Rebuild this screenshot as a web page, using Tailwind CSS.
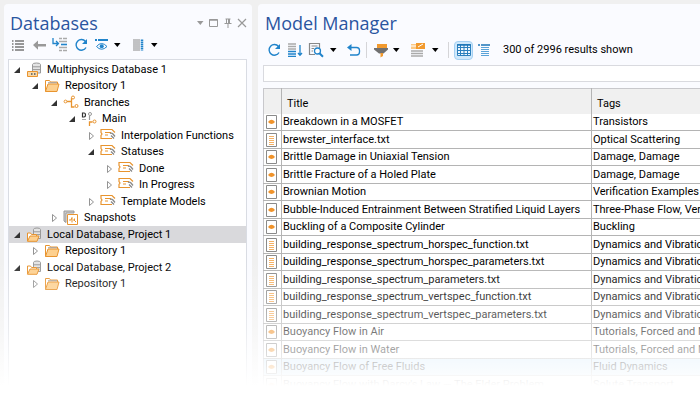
<!DOCTYPE html>
<html lang="en">
<head>
    <meta charset="UTF-8">
    <meta name="viewport" content="width=device-width, initial-scale=1.0">
    <title>Model Manager</title>
    <script src="https://cdn.jsdelivr.net/npm/@tailwindcss/browser@4"></script>
</head>
<body class="h-screen overflow-hidden bg-[#f0f0f0] font-['Roboto','Open_Sans',sans-serif] text-[11px] leading-4 text-black [&_svg]:fill-none">

    <!-- Shared icons -->
    <svg class="hidden">
        <symbol id="i-list" viewBox="0 0 16 16"><path d="M2 4h1.5M2 7h1.5M2 10h1.5M2 13h1.5M5 4h9M5 7h9M5 10h9M5 13h9" stroke="#777" stroke-width="1.3"/></symbol>
        <symbol id="i-back" viewBox="0 0 16 16"><path d="M2 8l5-4.500V7h8v2.500H7v3.300z" fill="#999"/></symbol>
        <symbol id="i-insert" viewBox="0 0 16 16"><path d="M1 1v5.500h5M4 4l2.500 2.500L4 9" stroke="#2184cb" stroke-width="1.3"/><path d="M7 1.500h3M11 1.500h4M7 4.500h8M7 10.500h8M7 13.500h3M11 13.500h4" stroke="#aaa" stroke-width="1.3"/><path d="M9 7.500h6" stroke="#2184cb" stroke-width="1.6"/></symbol>
        <symbol id="i-refresh" viewBox="0 0 16 16"><path d="M12.500 4.500A5.300 5.300 0 1 0 13 10.500" stroke="#2184cb" stroke-width="1.4"/><path d="M14 2v5H9z" fill="#2184cb"/></symbol>
        <symbol id="i-eye" viewBox="0 0 16 16"><path d="M1 3h2M4 3h10" stroke="#2184cb" stroke-width="2"/><path d="M2.500 9.500q5-6 10.500 0q-5.500 5.500-10.500 0z" stroke="#2184cb"/><circle cx="7.700" cy="9.300" r="2" fill="#2184cb"/></symbol>
        <symbol id="i-columns" viewBox="0 0 16 16"><path d="M2 3h7M2 5h7M2 7h7M2 9h7M2 11h7M2 13h7" stroke="#888"/><path d="M11 2.500v11" stroke="#2184cb" stroke-width="2.500" stroke-dasharray="1.500 .5"/></symbol>
        <symbol id="i-caret" viewBox="0 0 10 10"><path d="M2 3h6.500L5.300 7z" fill="currentColor"/></symbol>
        <symbol id="i-max" viewBox="0 0 10 10"><path d="M.5 1.500h8v7h-8z" stroke="#999"/><path d="M.5 2h8" stroke="#999" stroke-width="1.500"/></symbol>
        <symbol id="i-pin" viewBox="0 0 10 10"><path d="M2.500 1h5M3.500 1v4M1.500 5.500h7M5 6v4" stroke="#999"/><path d="M5 1h2v4.500H5z" fill="#999"/></symbol>
        <symbol id="i-close" viewBox="0 0 10 10"><path d="M1 1l8 8M9 1L1 9" stroke="#999" stroke-width="1.200"/></symbol>

        <symbol id="i-down" viewBox="0 0 16 16"><path d="M1 2h8M1 4.500h8M1 7h8" stroke="#aaa" stroke-width="1.300"/><path d="M1 9.500h8M1 12h8M1 14.300h8M13 3v10M11 11l2 2.300 2-2.300" stroke="#2184cb" stroke-width="1.300"/></symbol>
        <symbol id="i-search" viewBox="0 0 16 16"><path d="M7 12.500H1.500v-11h10V6M3.500 4h6M3.500 6.500H6M3.500 9H5" stroke="#888" stroke-width="1.200"/><circle cx="9.500" cy="9" r="3" fill="#fff" stroke="#2184cb" stroke-width="1.300"/><path d="M11.500 11.200l3.500 3.600" stroke="#2184cb" stroke-width="2"/></symbol>
        <symbol id="i-undo" viewBox="0 0 16 16"><path d="M3 5.500h7.500q3 0 3 3v1.500q0 3-3 3H4" stroke="#2184cb" stroke-width="1.300"/><path d="M1 5.500L5.500 2v7z" fill="#2184cb"/></symbol>
        <symbol id="i-filter" viewBox="0 0 16 16"><path d="M4 2h10v4H4z" fill="#f29a2e"/><path d="M1 6h14v1.500l-4.500 4H6L1 7.500z" fill="#707070"/><path d="M7.500 11h2.500v3l-2.500 1.500z" fill="#f29a2e"/></symbol>
        <symbol id="i-tag" viewBox="0 0 16 16"><path d="M1 2h6v5H1z" fill="#fbc885"/><path d="M6 1h9v6H6z" fill="#f29a2e"/><path d="M8 5l5-3M1 4h5" stroke="#fff"/><path d="M1 9h12M1 11.500h12M1 14h12" stroke="#aaa" stroke-width="1.300"/></symbol>
        <symbol id="i-grid" viewBox="0 0 16 16"><path d="M1.500 2.500h13v11h-13z" fill="#eef7fe"/><path d="M1.500 2.500h13v11h-13zM1 5.500h14M1 8.500h14M1 11.500h14M4.500 2.500v11M8 2.500v11M11.500 2.500v11" stroke="#2b7fbd"/><path d="M1 3h14" stroke="#1c76b8" stroke-width="1.500"/></symbol>
        <symbol id="i-detail" viewBox="0 0 16 16"><path d="M1 3h2M4 3h9" stroke="#1c76b8" stroke-width="1.600"/><path d="M4 5.500h8M4 7.500h8M4 9.500h8M4 11.500h8M4 13.500h8" stroke="#5aa3d8"/></symbol>

        <symbol id="i-open" viewBox="0 0 8 8"><path d="M7 1v6H1z" fill="#333"/></symbol>
        <symbol id="i-closed" viewBox="0 0 8 8"><path d="M2.500 .5l4 3.500-4 3.500z" stroke="#888" stroke-width=".9"/></symbol>
        <symbol id="i-server" viewBox="0 0 16 16"><path d="M6.500 2.500q0-1.500 4-1.500t4 1.500v8.500h-8z" fill="#e4e4e4" stroke="#999"/><path d="M6.500 4.800h8M6.500 7.600h8" stroke="#999"/><path d="M1.500 9.500h10v5h-10z" fill="#fbd7a2" stroke="#e8942f"/><path d="M5 12h1.500M8 12h1.500" stroke="#456" stroke-width="1.500"/></symbol>
        <symbol id="i-folder" viewBox="0 0 16 16"><path d="M1.500 13.500v-11h4l1 1.500h7v3" fill="#fff" stroke="#e8942f"/><path d="M4 4.800h9" stroke="#999"/><path d="M1.500 13.500l2.500-7.500h11l-2 7.500z" fill="#fdd08f" stroke="#e8942f"/></symbol>
        <symbol id="i-local" viewBox="0 0 16 16"><path d="M7.500 2.500q0-1.500 3.500-1.500t3.500 1.500v9h-7z" fill="#e4e4e4" stroke="#999"/><path d="M7.500 4.800h7M7.500 7.600h7" stroke="#999"/><path d="M1.500 14v-8h3l1 1.500h5V9" fill="#fff" stroke="#e8942f"/><path d="M1.500 14.300L4 9h9l-2 5.300z" fill="#fdd08f" stroke="#e8942f"/></symbol>
        <symbol id="i-branch" viewBox="0 0 16 16"><path d="M4 6.500h4.500M9.500 3.500h-1V12h3" stroke="#e8942f" stroke-width="1.300"/><circle cx="2.500" cy="6.500" r="1.400" stroke="#e8942f"/><circle cx="10" cy="2.500" r="1.500" fill="#fff" stroke="#e8942f"/><circle cx="13.500" cy="11" r="1.500" fill="#fff" stroke="#e8942f"/></symbol>
        <symbol id="i-main" viewBox="0 0 16 16"><path d="M1.500 2v4h1.500q1.500 0 1.500-2t-1.500-2z" stroke="#333" stroke-width="1.200"/><path d="M1 8.500h4" stroke="#aaa"/><circle cx="9" cy="3" r="1.500" stroke="#999"/><path d="M8.500 5v4" stroke="#999" stroke-width="1.200"/><path d="M8.500 15v-4h3" stroke="#e8942f" stroke-width="1.300"/><circle cx="13.500" cy="10.500" r="1.500" stroke="#e8942f"/></symbol>
        <symbol id="i-status" viewBox="0 0 16 16"><path d="M12 10.500H1v-3l1-1.500-1-1.500v-3h11l3 3" stroke="#e8942f" stroke-width="1.200"/><path d="M5 4.500h6M5 7h3" stroke="#e8942f"/><path d="M10 5.500q1.500-1 3 .5l2 2.500M11 7.500l3 3" stroke="#888" stroke-width="1.300"/></symbol>
        <symbol id="i-snap" viewBox="0 0 16 16"><path d="M1 11V1h10v2H3v9.500z" fill="#ccc" stroke="#999"/><path d="M4.500 4.500h10v10h-10z" fill="#fff" stroke="#e8942f"/><path d="M6 10h2l1-2.500v5M10 10h1l2 2M11.500 8.500v2" stroke="#e8942f"/></symbol>
        <symbol id="i-model" viewBox="0 0 12 14"><path d="M.5.5h10v13H.5z" fill="#fff" stroke="#8a8a8a"/><path d="M2 7q3.500-4.500 7 0q-3.500 4-7 0z" fill="#f0932b"/></symbol>
        <symbol id="i-file" viewBox="0 0 12 14"><path d="M.5.5h10v13H.5z" fill="#fff" stroke="#8a8a8a"/><path d="M3 3.500h5M3 5.500h5M3 7.500h5M3 9.500h5M3 11.500h5" stroke="#f5b266" stroke-width="1.200"/></symbol>
    </svg>

    <div class="relative flex h-full gap-[6px] pt-1 pl-1">
        <section class="flex w-[248px] shrink-0 flex-col rounded-t bg-[#fafbff] pr-[5px] pl-1">
            <header class="flex items-center justify-between pt-[5px] pl-[2px]">
                <h1 class="font-['Open_Sans',sans-serif] text-[18px] leading-7 text-[#2a559f]">Databases</h1>
                <div class="flex gap-1 text-[#999]">
                    <button aria-label="Menu"><svg class="size-[10px]"><use href="#i-caret"/></svg></button>
                    <button aria-label="Maximize"><svg class="size-[10px]"><use href="#i-max"/></svg></button>
                    <button aria-label="Pin"><svg class="size-[10px]"><use href="#i-pin"/></svg></button>
                    <button aria-label="Close"><svg class="size-[10px]"><use href="#i-close"/></svg></button>
                </div>
            </header>
            <div class="flex h-[22px] items-start gap-[5px] pl-[2px] text-black">
                <button aria-label="Show list"><svg class="size-4"><use href="#i-list"/></svg></button>
                <button aria-label="Back"><svg class="size-4"><use href="#i-back"/></svg></button>
                <button aria-label="Insert"><svg class="size-4"><use href="#i-insert"/></svg></button>
                <button aria-label="Refresh"><svg class="size-4"><use href="#i-refresh"/></svg></button>
                <button aria-label="Visibility" class="flex items-center gap-[2px]"><svg class="size-4"><use href="#i-eye"/></svg><svg class="size-[10px]"><use href="#i-caret"/></svg></button>
                <button aria-label="Columns" class="ml-1 flex items-center gap-[2px]"><svg class="size-4"><use href="#i-columns"/></svg><svg class="size-[10px]"><use href="#i-caret"/></svg></button>
            </div>
            <ul id="tree" class="flex-1 border border-[#d9dce3] bg-white pt-px"></ul>
        </section>

        <section class="flex min-w-0 flex-1 flex-col overflow-hidden rounded-tl bg-[#fafbff] pl-[5px]">
            <h1 class="pt-[3px] pl-[2px] font-['Open_Sans',sans-serif] text-[18px] leading-8 text-[#2a559f]">Model Manager</h1>
            <div class="flex h-[22px] items-center pl-[3px] text-black">
                <button aria-label="Refresh"><svg class="size-4"><use href="#i-refresh"/></svg></button>
                <button aria-label="Load more" class="ml-[5px]"><svg class="size-4"><use href="#i-down"/></svg></button>
                <button aria-label="Search" class="ml-[5px] flex items-center gap-1"><svg class="size-4"><use href="#i-search"/></svg><svg class="size-[10px]"><use href="#i-caret"/></svg></button>
                <button aria-label="Reset" class="ml-2"><svg class="size-4"><use href="#i-undo"/></svg></button>
                <span class="ml-1 h-4 w-px bg-[#d5d5d8]"></span>
                <button aria-label="Filter" class="ml-[6px] flex items-center gap-[2px]"><svg class="size-4"><use href="#i-filter"/></svg><svg class="size-[10px]"><use href="#i-caret"/></svg></button>
                <button aria-label="Tags" class="ml-[9px] flex items-center gap-1"><svg class="size-4"><use href="#i-tag"/></svg><svg class="size-[10px]"><use href="#i-caret"/></svg></button>
                <span class="ml-2 h-4 w-px bg-[#d5d5d8]"></span>
                <button aria-label="Table view" class="ml-[5px] flex size-[19px] items-center justify-center rounded-sm border border-[#a5d0f2] bg-[#cfe8fb]"><svg class="size-4"><use href="#i-grid"/></svg></button>
                <button aria-label="Detail view" class="ml-1"><svg class="size-4"><use href="#i-detail"/></svg></button>
                <span class="ml-[10px]">300 of 2996 results shown</span>
            </div>
            <input type="text" aria-label="Search models" class="mt-1 mb-[6px] h-[17px] shrink-0 border border-r-0 border-[#d9dadf] bg-white px-1 outline-none">
            <table class="w-full min-w-[640px] table-fixed border-collapse border-t border-l border-[#c8c8cc] bg-white whitespace-nowrap">
                <thead>
                    <tr class="h-[25px] bg-[#f0f0f0] text-left">
                        <th class="w-[18px] border-r border-[#b4b4b4] p-0"></th>
                        <th class="w-[310px] border-r border-[#b4b4b4] p-0 pt-[5px] pl-[5px] font-normal">Title</th>
                        <th class="p-0 pt-[5px] pl-[5px] font-normal">Tags</th>
                    </tr>
                </thead>
                <tbody id="results"></tbody>
            </table>
        </section>

        <!-- Fade out at the bottom -->
        <div class="pointer-events-none absolute inset-x-0 bottom-0 h-[140px] bg-linear-to-b from-white/0 via-white/45 to-white to-90%"></div>
    </div>

    <script>
        const indents = ["pl-1", "pl-[22px]", "pl-[41px]", "pl-[59px]", "pl-[78px]", "pl-24"];

        // level, open, icon, label
        const nodes = [
            [0, true, "server", "Multiphysics Database 1"],
            [1, true, "folder", "Repository 1"],
            [2, true, "branch", "Branches"],
            [3, true, "main", "Main"],
            [4, false, "status", "Interpolation Functions"],
            [4, true, "status", "Statuses"],
            [5, false, "status", "Done"],
            [5, false, "status", "In Progress"],
            [4, false, "status", "Template Models"],
            [2, false, "snap", "Snapshots"],
            [0, true, "local", "Local Database, Project 1", true],
            [1, false, "folder", "Repository 1"],
            [0, true, "local", "Local Database, Project 2"],
            [1, false, "folder", "Repository 1"]
        ];

        const results = [
            ["model", "Breakdown in a MOSFET", "Transistors"],
            ["file", "brewster_interface.txt", "Optical Scattering"],
            ["model", "Brittle Damage in Uniaxial Tension", "Damage, Damage"],
            ["model", "Brittle Fracture of a Holed Plate", "Damage, Damage"],
            ["model", "Brownian Motion", "Verification Examples"],
            ["model", "Bubble-Induced Entrainment Between Stratified Liquid Layers", "Three-Phase Flow, Verification Examples"],
            ["model", "Buckling of a Composite Cylinder", "Buckling"],
            ["file", "building_response_spectrum_horspec_function.txt", "Dynamics and Vibration"],
            ["file", "building_response_spectrum_horspec_parameters.txt", "Dynamics and Vibration"],
            ["file", "building_response_spectrum_parameters.txt", "Dynamics and Vibration"],
            ["file", "building_response_spectrum_vertspec_function.txt", "Dynamics and Vibration"],
            ["file", "building_response_spectrum_vertspec_parameters.txt", "Dynamics and Vibration"],
            ["model", "Buoyancy Flow in Air", "Tutorials, Forced and Natural Convection"],
            ["model", "Buoyancy Flow in Water", "Tutorials, Forced and Natural Convection"],
            ["model", "Buoyancy Flow of Free Fluids", "Fluid Dynamics", true],
            ["model", "Buoyancy Flow with Darcy's Law — The Elder Problem", "Solute Transport"]
        ];

        document.getElementById("tree").innerHTML = nodes.map(([level, open, icon, label, selected]) => `
            <li class="flex h-[17px] items-center even:h-4 ${indents[level]} ${selected ? "bg-[#d9d9dc]" : ""}">
                <svg class="size-2 shrink-0"><use href="#i-${open ? "open" : "closed"}"/></svg>
                <svg class="ml-[5px] size-4 shrink-0"><use href="#i-${icon}"/></svg>
                <span class="ml-[5px] whitespace-nowrap">${label}</span>
            </li>`).join("");

        document.getElementById("results").innerHTML = results.map(([icon, title, tags, selected]) => `
            <tr class="h-[17px] border-b border-[#b4b4b4] even:h-[18px] ${selected ? "bg-[#d5ebfb]" : ""}">
                <td class="border-r border-[#b4b4b4] p-0 pl-[2px]"><svg class="h-[14px] w-3"><use href="#i-${icon}"/></svg></td>
                <td class="border-r border-[#b4b4b4] p-0 pl-px">${title}</td>
                <td class="p-0 pl-px">${tags}</td>
            </tr>`).join("");
    </script>

</body>
</html>
